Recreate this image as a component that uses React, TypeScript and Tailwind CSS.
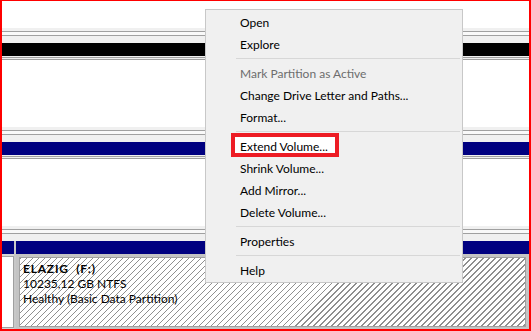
import React from "react";

type MenuEntry = { label?: string; disabled?: boolean; sep?: boolean; marked?: boolean };

const entries: MenuEntry[] = [
  { label: "Open" },
  { label: "Explore" },
  { sep: true },
  { label: "Mark Partition as Active", disabled: true },
  { label: "Change Drive Letter and Paths..." },
  { label: "Format..." },
  { sep: true },
  { label: "Extend Volume...", marked: true },
  { label: "Shrink Volume..." },
  { label: "Add Mirror..." },
  { label: "Delete Volume..." },
  { sep: true },
  { label: "Properties" },
  { sep: true },
  { label: "Help" },
];

function DiskStrip({ bar, split }: { bar: string; split?: boolean }) {
  return (
    <div className="flex flex-col">
      <div className="h-[3px] bg-[#f0f0f0]" />
      <div className="h-px bg-[#a0a0a0]" />
      <div className="h-[3px] bg-[#f9f9f9]" />
      <div className="h-px bg-[#a0a0a0]" />
      <div className="h-[7px] bg-[#f0f0f0]" />
      {split ? (
        <div className="flex h-[13px]">
          <div className={`w-[12px] ${bar}`} />
          <div className="w-[2px] bg-[#c8c8c8]" />
          <div className={`flex-1 ${bar}`} />
        </div>
      ) : (
        <div className={`h-[13px] ${bar}`} />
      )}
      {!split && (
        <>
          <div className="h-px bg-[#f0f0f0]" />
          <div className="h-px bg-[#a0a0a0]" />
          <div className="h-px bg-[#f0f0f0]" />
          <div className="h-px bg-[#a0a0a0]" />
        </>
      )}
    </div>
  );
}

function ContextMenu() {
  return (
    <div className="absolute left-[203px] top-[8px] flex w-[258px] flex-col border border-[#c8c8c8] bg-[#f0f0f0] py-px">
      {entries.map((e, i) =>
        e.sep ? (
          <div key={i} className="flex h-[7px] items-center pl-[30px] pr-[2px]">
            <div className="h-px w-full bg-[#d7d7d7]" />
          </div>
        ) : (
          <div key={i} className="relative flex h-[22px] items-center pl-[34px]">
            {e.marked && (
              <div className="absolute left-[25px] top-[-2px] h-[24px] w-[108px] border-4 border-[#ed1c24] bg-white" />
            )}
            <span className={`relative ${e.disabled ? "text-[#6d6d6d]" : "text-black"}`}>{e.label}</span>
          </div>
        )
      )}
    </div>
  );
}

export default function App() {
  return (
    <div className="relative flex h-[331px] w-[531px] flex-col overflow-hidden border-2 border-t border-[#ff0000] bg-white font-['Lato',sans-serif] text-[12px] leading-[15px] text-black">
      <div className="h-[27px] shrink-0" />
      <DiskStrip bar="bg-black" />
      <div className="h-[67px] shrink-0" />
      <DiskStrip bar="bg-[#000080]" />
      <div className="h-[67px] shrink-0" />
      <DiskStrip bar="bg-[#000080]" split />

      {/* partition row */}
      <div className="flex flex-1">
        <div className="flex w-[12px] flex-col bg-[#d4d4d4] pt-[2px] pb-[1px]">
          <div className="flex-1 border-t border-r border-b border-[#a0a0a0] bg-white" />
        </div>
        <div className="w-[2px] bg-[#c8c8c8]" />
        <div className="flex flex-1 bg-[#c4c4c4] p-[3px] pb-[2px]">
          <div className="flex-1 border border-[#a0a0a0] bg-white bg-[repeating-linear-gradient(135deg,#8f8f8f_0px,#8f8f8f_1px,transparent_1px,transparent_4.25px)] pl-[3px] pt-[3px]">
            <div className="font-bold tracking-[0.8px]">ELAZIG&nbsp;&nbsp;(F:)</div>
            <div>10235,12 GB NTFS</div>
            <div>Healthy (Basic Data Partition)</div>
          </div>
        </div>
      </div>

      <ContextMenu />
    </div>
  );
}
